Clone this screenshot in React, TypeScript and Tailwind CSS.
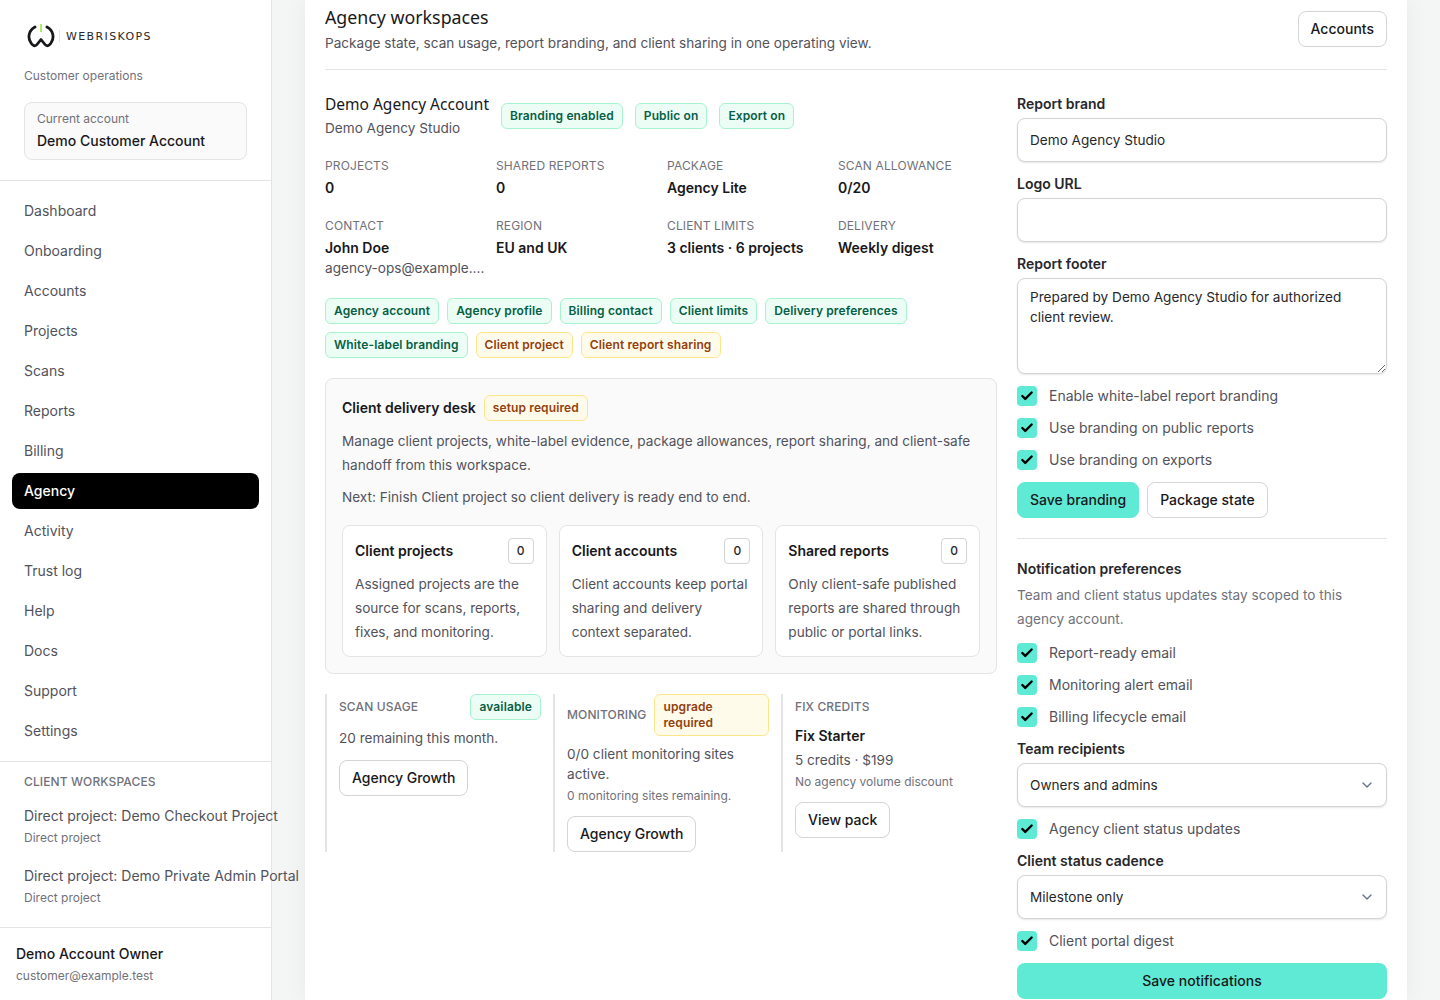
import { Check, ChevronDown } from "lucide-react";

const nav = ["Dashboard", "Onboarding", "Accounts", "Projects", "Scans", "Reports", "Billing", "Agency", "Activity", "Trust log", "Help", "Docs", "Support", "Settings"];

const metrics = [
  { label: "PROJECTS", value: "0" },
  { label: "SHARED REPORTS", value: "0" },
  { label: "PACKAGE", value: "Agency Lite" },
  { label: "SCAN ALLOWANCE", value: "0/20" },
  { label: "CONTACT", value: "John Doe", sub: "agency-ops@example...." },
  { label: "REGION", value: "EU and UK" },
  { label: "CLIENT LIMITS", value: "3 clients · 6 projects" },
  { label: "DELIVERY", value: "Weekly digest" },
];

const desk = [
  { title: "Client projects", body: "Assigned projects are the source for scans, reports, fixes, and monitoring." },
  { title: "Client accounts", body: "Client accounts keep portal sharing and delivery context separated." },
  { title: "Shared reports", body: "Only client-safe published reports are shared through public or portal links." },
];

function Tag({ children, warn }: { children: React.ReactNode; warn?: boolean }) {
  return (
    <span
      className={`inline-block rounded-md border px-2 py-1 text-xs leading-4 font-semibold tracking-[0.01em] ${
        warn ? "border-[#fde68a] bg-[#fffbeb] text-[#92400e]" : "border-[#a7f3d0] bg-[#ecfdf5] text-[#065f46]"
      }`}
    >
      {children}
    </span>
  );
}

function Btn({ children }: { children: React.ReactNode }) {
  return (
    <span className="inline-flex h-9 items-center rounded-lg border border-[#d4d4d8] bg-white px-3 text-sm font-medium text-[#18181b]">
      {children}
    </span>
  );
}

function Field({ label }: { label: string }) {
  return <div className="mb-1 text-sm leading-5 font-semibold text-[#27272a]">{label}</div>;
}

function Input({ value }: { value?: string }) {
  return (
    <div className="flex h-11 items-center rounded-lg border border-[#d4d4d8] bg-white px-3 text-[13.6px] text-[#27272a] shadow-[0_1px_2px_rgba(0,0,0,0.1)]">
      {value}
    </div>
  );
}

function Select({ value }: { value: string }) {
  return (
    <div className="flex h-11 items-center justify-between rounded-lg border border-[#d4d4d8] bg-white pr-[11px] pl-3 text-[13.6px] text-[#27272a] shadow-[0_1px_2px_rgba(0,0,0,0.1)]">
      {value}
      <ChevronDown className="h-4 w-4 text-[#64748b]" strokeWidth={2} />
    </div>
  );
}

function Checkbox({ label }: { label: string }) {
  return (
    <div className="flex h-5 items-center gap-3 text-sm text-[#52525b]">
      <span className="flex h-5 w-5 items-center justify-center rounded bg-[#5eead4]">
        <Check className="h-3.5 w-3.5 text-black" strokeWidth={4} />
      </span>
      {label}
    </div>
  );
}

function Logo() {
  return (
    <div className="flex h-6 items-center">
      <svg width="28" height="26" viewBox="0 0 28 26" fill="none" className="ml-[3px] shrink-0">
        <path d="M8 4 C2 7 0.5 14 3.5 19 C5 22.5 8 24 10 21.5 L14 16.5 L18 21.5 C20 24 23 22.5 24.5 19 C27.5 14 26 7 20 4" stroke="#18181b" strokeWidth="2.8" strokeLinecap="round" strokeLinejoin="round" />
        <path d="M14 1 V9" stroke="#a3e635" strokeWidth="1.6" />
      </svg>
      <span className="ml-[4px] h-3 border-l border-[#e4e4e7]" />
      <span className="mt-0.5 ml-[6px] font-['DejaVu_Sans',sans-serif] text-[11px] font-normal tracking-[0.125em] whitespace-nowrap text-[#27272a]">WEBRISKOPS</span>
    </div>
  );
}

export default function App() {
  return (
    <div className="flex h-screen overflow-hidden bg-[#f4f5f5] font-['Inter',sans-serif]">
      <aside className="relative z-10 flex h-full w-[272px] shrink-0 flex-col border-r border-[#e4e4e7] bg-white">
        <div className="border-b border-[#e4e4e7] px-6 pt-6 pb-5">
          <Logo />
          <div className="mt-5 text-xs leading-4 text-[#71717a]">Customer operations</div>
          <div className="mt-[18px] h-[58px] w-[223px] rounded-lg border border-[#e4e4e7] bg-[#fafafa] px-3 py-[7px]">
            <div className="text-xs leading-[18px] text-[#71717a]">Current account</div>
            <div className="mt-[3px] text-sm leading-5 font-medium text-[#18181b]">Demo Customer Account</div>
          </div>
        </div>
        <nav className="flex flex-col gap-1 border-b border-[#e4e4e7] px-3 pt-3 pb-3">
          {nav.map((n) => (
            <div
              key={n}
              className={`flex h-9 items-center rounded-lg px-3 text-sm ${
                n === "Agency" ? "bg-black font-medium text-white" : "text-[#52525b]"
              }`}
            >
              {n}
            </div>
          ))}
        </nav>
        <div className="border-b border-[#e4e4e7] px-6 pt-3 pb-[21px]">
          <div className="text-xs leading-4 font-medium tracking-[0.01em] text-[#71717a]">CLIENT WORKSPACES</div>
          <div className="mt-4 text-sm leading-5 whitespace-nowrap text-[#52525b]">Direct project: Demo Checkout Project</div>
          <div className="mt-1 text-xs leading-4 text-[#71717a]">Direct project</div>
          <div className="mt-5 text-sm leading-5 whitespace-nowrap text-[#52525b]">Direct project: Demo Private Admin Portal</div>
          <div className="mt-1 text-xs leading-4 text-[#71717a]">Direct project</div>
        </div>
        <div className="px-4 pt-4">
          <div className="text-sm leading-5 font-medium text-[#18181b]">Demo Account Owner</div>
          <div className="mt-1 text-xs leading-4 text-[#71717a]">customer@example.test</div>
        </div>
      </aside>

      <main className="mx-[33px] h-full flex-1 overflow-hidden bg-white px-5 shadow-[0_0_24px_rgba(0,0,0,0.05)]">
        <header className="flex h-[70px] items-start justify-between border-b border-[#e4e4e7] pt-[5px]">
          <div>
            <h1 className="font-['Noto_Sans',sans-serif] text-[17.8px] leading-6 font-normal text-[#18181b]">Agency workspaces</h1>
            <p className="mt-1 text-[13.6px] leading-5 text-[#52525b]">Package state, scan usage, report branding, and client sharing in one operating view.</p>
          </div>
          <div className="mt-1.5">
            <Btn>Accounts</Btn>
          </div>
        </header>

        <div className="mt-6 flex gap-5">
          <div className="w-[672px] shrink-0">
            <div className="flex items-start gap-3">
              <div>
                <div className="font-['Noto_Sans',sans-serif] text-[15.5px] leading-5 text-[#18181b]">Demo Agency Account</div>
                <div className="mt-1 text-[13.6px] leading-5 text-[#52525b]">Demo Agency Studio</div>
              </div>
              <div className="mt-[9px] flex gap-3">
                <Tag>Branding enabled</Tag>
                <Tag>Public on</Tag>
                <Tag>Export on</Tag>
              </div>
            </div>

            <div className="mt-5 grid grid-cols-4 gap-x-3 gap-y-5">
              {metrics.map((m) => (
                <div key={m.label}>
                  <div className="text-xs leading-4 tracking-[0.01em] text-[#71717a]">{m.label}</div>
                  <div className="mt-1 text-sm leading-5 font-semibold text-[#18181b]">{m.value}</div>
                  {m.sub && <div className="text-[13.6px] leading-5 whitespace-nowrap text-[#52525b]">{m.sub}</div>}
                </div>
              ))}
            </div>

            <div className="mt-5 flex flex-wrap gap-x-2 gap-y-2">
              {["Agency account", "Agency profile", "Billing contact", "Client limits", "Delivery preferences", "White-label branding"].map((t) => (
                <Tag key={t}>{t}</Tag>
              ))}
              <Tag warn>Client project</Tag>
              <Tag warn>Client report sharing</Tag>
            </div>

            <section className="mt-5 rounded-lg border border-[#e4e4e7] bg-[#fafafa] px-4 pt-4 pb-4">
              <div className="flex items-center gap-2">
                <span className="text-sm font-semibold text-[#18181b]">Client delivery desk</span>
                <Tag warn>setup required</Tag>
              </div>
              <p className="mt-2 text-[13.6px] leading-6 text-[#52525b]">
                Manage client projects, white-label evidence, package allowances, report sharing, and client-safe handoff from this workspace.
              </p>
              <p className="mt-2 text-[13.6px] leading-6 text-[#52525b]">Next: Finish Client project so client delivery is ready end to end.</p>
              <div className="mt-4 grid grid-cols-3 gap-3">
                {desk.map((d) => (
                  <div key={d.title} className="h-[132px] rounded-lg border border-[#e4e4e7] bg-white px-3 pt-3">
                    <div className="flex items-center justify-between">
                      <span className="text-sm font-semibold text-[#18181b]">{d.title}</span>
                      <span className="flex h-[26px] w-[26px] items-center justify-center rounded border border-[#d4d4d8] text-xs font-medium text-[#27272a]">0</span>
                    </div>
                    <p className="mt-2 text-[13.6px] leading-6 text-[#52525b]">{d.body}</p>
                  </div>
                ))}
              </div>
            </section>

            <div className="mt-5 grid h-[158px] grid-cols-[228px_228px_1fr]">
              <div className="border-l-2 border-[#e4e4e7] pr-3 pl-3">
                <div className="flex items-center justify-between">
                  <span className="text-xs font-medium tracking-[0.01em] text-[#71717a]">SCAN USAGE</span>
                  <Tag>available</Tag>
                </div>
                <p className="mt-2 text-[13.6px] leading-5 text-[#52525b]">20 remaining this month.</p>
                <div className="mt-3"><Btn>Agency Growth</Btn></div>
              </div>
              <div className="border-l-2 border-[#e4e4e7] pr-3 pl-3">
                <div className="flex items-center gap-2">
                  <span className="text-xs font-medium tracking-[0.01em] text-[#71717a]">MONITORING</span>
                  <Tag warn>upgrade required</Tag>
                </div>
                <p className="mt-2 text-[13.6px] leading-5 text-[#52525b]">0/0 client monitoring sites active.</p>
                <p className="mt-1 text-xs leading-4 text-[#71717a]">0 monitoring sites remaining.</p>
                <div className="mt-3"><Btn>Agency Growth</Btn></div>
              </div>
              <div className="border-l-2 border-[#e4e4e7] pl-3">
                <div className="pt-[5px] text-xs leading-4 font-medium tracking-[0.01em] text-[#71717a]">FIX CREDITS</div>
                <div className="mt-[11px] text-sm leading-5 font-semibold text-[#18181b]">Fix Starter</div>
                <p className="mt-1 text-[13.6px] leading-5 text-[#52525b]">5 credits · $199</p>
                <p className="mt-1 text-xs leading-4 text-[#71717a]">No agency volume discount</p>
                <div className="mt-3"><Btn>View pack</Btn></div>
              </div>
            </div>
          </div>

          <div className="w-[370px] shrink-0">
            <Field label="Report brand" />
            <Input value="Demo Agency Studio" />
            <div className="mt-3"><Field label="Logo URL" /></div>
            <Input />
            <div className="mt-3"><Field label="Report footer" /></div>
            <textarea
              readOnly
              className="block h-24 w-full rounded-lg border border-[#d4d4d8] bg-white px-3 py-2 text-[13.6px] leading-5 text-[#27272a] shadow-[0_1px_2px_rgba(0,0,0,0.1)] outline-none"
              value="Prepared by Demo Agency Studio for authorized client review."
            />
            <div className="mt-3 flex flex-col gap-3">
              <Checkbox label="Enable white-label report branding" />
              <Checkbox label="Use branding on public reports" />
              <Checkbox label="Use branding on exports" />
            </div>
            <div className="mt-3 flex gap-2">
              <span className="inline-flex h-9 items-center rounded-lg border border-[#5eead4] bg-[#5eead4] px-3 text-sm font-medium text-[#18181b]">Save branding</span>
              <Btn>Package state</Btn>
            </div>
            <div className="mt-5 border-t border-[#e4e4e7] pt-5">
              <div className="text-sm leading-5 font-semibold text-[#27272a]">Notification preferences</div>
              <p className="mt-1 text-[13.6px] leading-6 text-[#71717a]">Team and client status updates stay scoped to this agency account.</p>
              <div className="mt-3 flex flex-col gap-3">
                <Checkbox label="Report-ready email" />
                <Checkbox label="Monitoring alert email" />
                <Checkbox label="Billing lifecycle email" />
              </div>
              <div className="mt-3"><Field label="Team recipients" /></div>
              <Select value="Owners and admins" />
              <div className="mt-3"><Checkbox label="Agency client status updates" /></div>
              <div className="mt-3"><Field label="Client status cadence" /></div>
              <Select value="Milestone only" />
              <div className="mt-3"><Checkbox label="Client portal digest" /></div>
              <div className="mt-3 flex h-9 items-center justify-center rounded-lg bg-[#5eead4] text-sm font-medium text-[#18181b]">Save notifications</div>
            </div>
          </div>
        </div>
      </main>
    </div>
  );
}
